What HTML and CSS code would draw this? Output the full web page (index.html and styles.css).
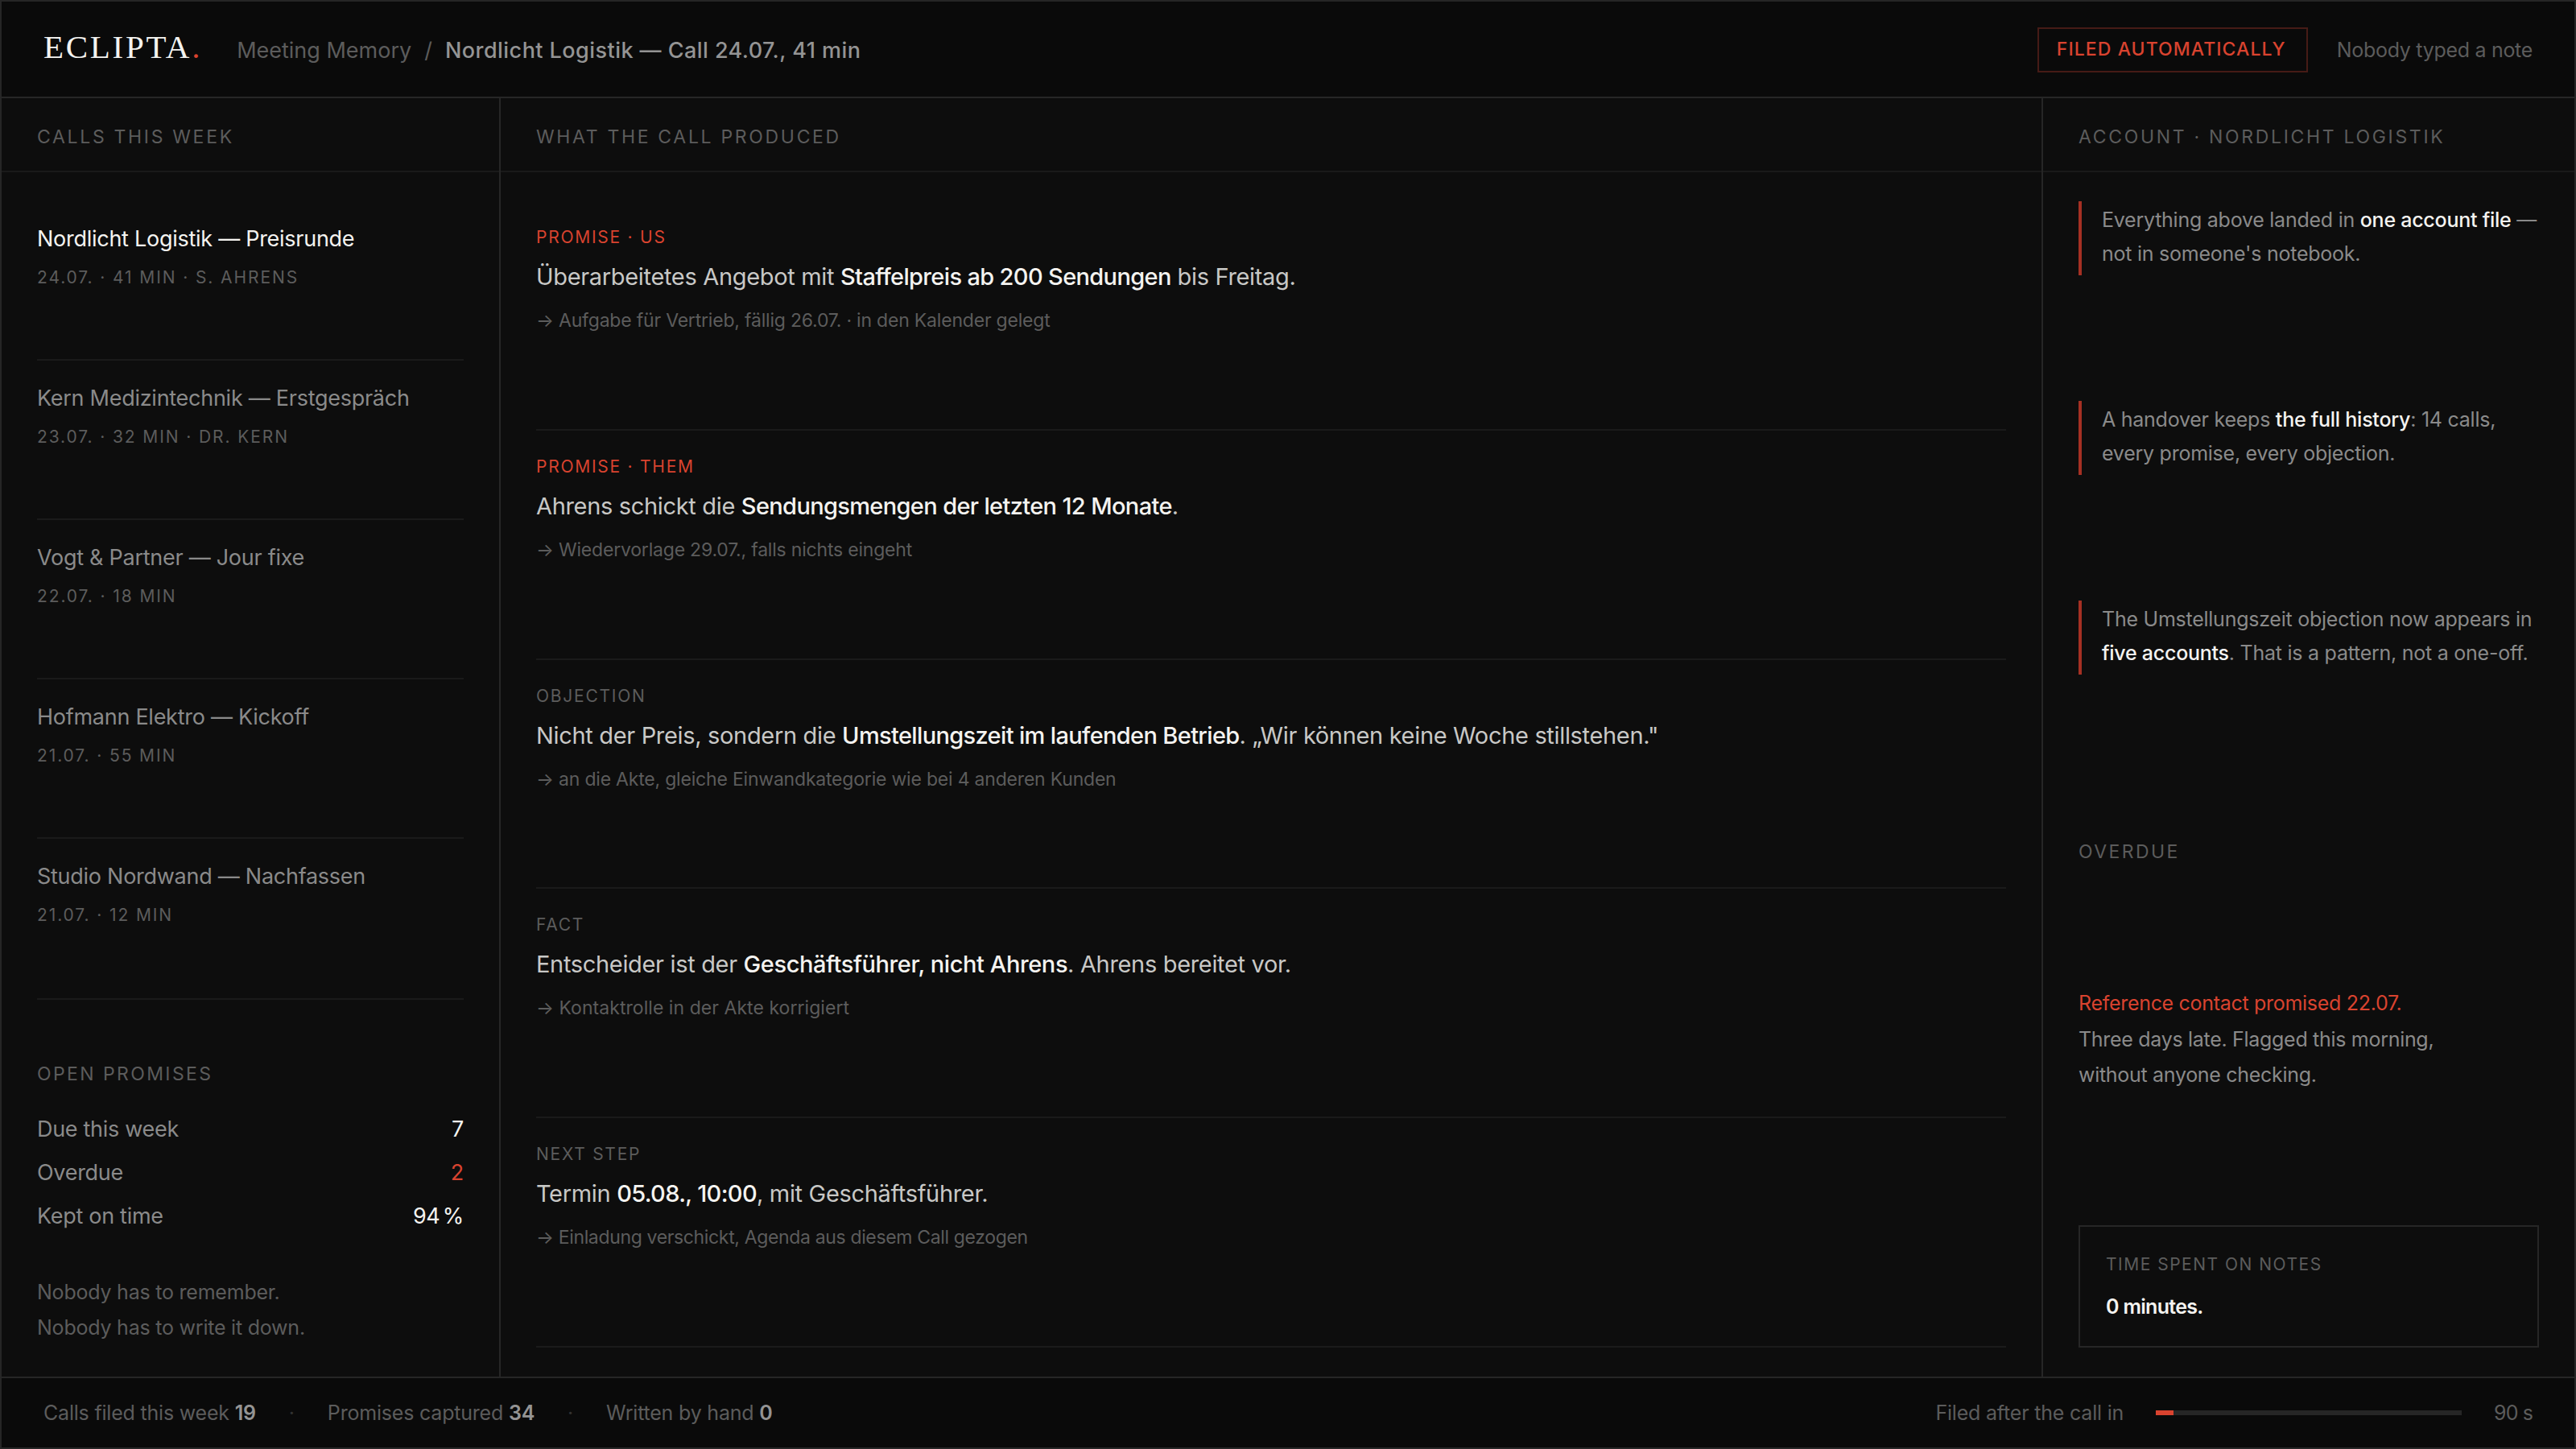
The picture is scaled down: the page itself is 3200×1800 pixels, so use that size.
FILE: index.html
```html
<!DOCTYPE html>
<html lang="en">
<head>
  <meta charset="utf-8">
  <title>Eclipta – Meeting Memory</title>
  <link rel="stylesheet" href="styles.css">
</head>
<body>
  <div class="app">
    <header class="topbar">
      <div class="brand">
        <div class="logo">ECLIPTA<span class="logo-dot">.</span></div>
        <div class="crumbs">
          <span>Meeting Memory</span>
          <span>/</span>
          <span class="crumb-current">Nordlicht Logistik — Call 24.07., 41 min</span>
        </div>
      </div>
      <div class="topbar-right">
        <div class="badge">FILED AUTOMATICALLY</div>
        <div class="topbar-note">Nobody typed a note</div>
      </div>
    </header>

    <main class="columns">
      <section class="column">
        <h2 class="column-head">CALLS THIS WEEK</h2>
        <div class="column-body">
          <div class="call-list">
            <div class="call active">
              <div class="call-title">Nordlicht Logistik — Preisrunde</div>
              <div class="call-meta">24.07. · 41 MIN · S. AHRENS</div>
            </div>
            <div class="call">
              <div class="call-title">Kern Medizintechnik — Erstgespräch</div>
              <div class="call-meta">23.07. · 32 MIN · DR. KERN</div>
            </div>
            <div class="call">
              <div class="call-title">Vogt &amp; Partner — Jour fixe</div>
              <div class="call-meta">22.07. · 18 MIN</div>
            </div>
            <div class="call">
              <div class="call-title">Hofmann Elektro — Kickoff</div>
              <div class="call-meta">21.07. · 55 MIN</div>
            </div>
            <div class="call">
              <div class="call-title">Studio Nordwand — Nachfassen</div>
              <div class="call-meta">21.07. · 12 MIN</div>
            </div>
          </div>
          <div class="summary">
            <div class="section-label">OPEN PROMISES</div>
            <div class="stats">
              <div class="stat"><span>Due this week</span><span class="stat-value">7</span></div>
              <div class="stat"><span>Overdue</span><span class="stat-value late">2</span></div>
              <div class="stat"><span>Kept on time</span><span class="stat-value">94 %</span></div>
            </div>
            <p class="summary-note">Nobody has to remember.<br>Nobody has to write it down.</p>
          </div>
        </div>
      </section>

      <section class="column">
        <h2 class="column-head">WHAT THE CALL PRODUCED</h2>
        <div class="column-body">
          <div class="entry promise">
            <div class="entry-type">PROMISE · US</div>
            <div class="entry-text">Überarbeitetes Angebot mit <strong>Staffelpreis ab 200 Sendungen</strong> bis Freitag.</div>
            <div class="entry-action">→ Aufgabe für Vertrieb, fällig 26.07. · in den Kalender gelegt</div>
          </div>
          <div class="entry promise">
            <div class="entry-type">PROMISE · THEM</div>
            <div class="entry-text">Ahrens schickt die <strong>Sendungsmengen der letzten 12 Monate</strong>.</div>
            <div class="entry-action">→ Wiedervorlage 29.07., falls nichts eingeht</div>
          </div>
          <div class="entry">
            <div class="entry-type">OBJECTION</div>
            <div class="entry-text">Nicht der Preis, sondern die <strong>Umstellungszeit im laufenden Betrieb</strong>. „Wir können keine Woche stillstehen."</div>
            <div class="entry-action">→ an die Akte, gleiche Einwandkategorie wie bei 4 anderen Kunden</div>
          </div>
          <div class="entry wide">
            <div class="entry-type">FACT</div>
            <div class="entry-text">Entscheider ist der <strong>Geschäftsführer, nicht Ahrens</strong>. Ahrens bereitet vor.</div>
            <div class="entry-action">→ Kontaktrolle in der Akte korrigiert</div>
          </div>
          <div class="entry tight">
            <div class="entry-type">NEXT STEP</div>
            <div class="entry-text">Termin <strong>05.08., 10:00</strong>, mit Geschäftsführer.</div>
            <div class="entry-action">→ Einladung verschickt, Agenda aus diesem Call gezogen</div>
          </div>
        </div>
      </section>

      <section class="column">
        <h2 class="column-head">ACCOUNT · NORDLICHT LOGISTIK</h2>
        <div class="column-body account">
          <div class="insight">Everything above landed in <strong>one account file</strong> —<br>not in someone's notebook.</div>
          <div class="insight">A handover keeps <strong>the full history</strong>: 14 calls,<br>every promise, every objection.</div>
          <div class="insight">The Umstellungszeit objection now appears in<br><strong>five accounts</strong>. That is a pattern, not a one-off.</div>
          <div class="section-label overdue-label">OVERDUE</div>
          <p class="overdue"><span class="late">Reference contact promised 22.07.</span><br>Three days late. Flagged this morning,<br>without anyone checking.</p>
          <div class="note-time">
            <div class="note-time-label">TIME SPENT ON NOTES</div>
            <div class="note-time-value">0 minutes.</div>
          </div>
        </div>
      </section>
    </main>

    <footer class="statusbar">
      <div class="counters">
        <span>Calls filed this week <b>19</b></span>
        <span class="dot">·</span>
        <span>Promises captured <b>34</b></span>
        <span class="dot">·</span>
        <span>Written by hand <b>0</b></span>
      </div>
      <div class="timer">
        <span>Filed after the call in</span>
        <div class="bar"><div class="bar-fill"></div></div>
        <span class="timer-value">90 s</span>
      </div>
    </footer>
  </div>
</body>
</html>
```

FILE: styles.css
```css
* {
  box-sizing: border-box;
}
body {
  margin: 0;
  background: #0d0d0d;
  font-family: Inter, sans-serif;
  color: #8a8a8a;
}
h2,
p {
  margin: 0;
  font-weight: 400;
}
strong {
  font-weight: 500;
  color: #f4f3f0;
}
.app {
  display: flex;
  flex-direction: column;
  width: 3200px;
  height: 1800px;
  border: 2px solid #262626;
}
.late {
  color: #d9432f;
}

/* top bar */
.topbar {
  display: flex;
  align-items: center;
  justify-content: space-between;
  height: 120px;
  padding: 2px 52px 0;
  background: #0a0a0a;
  border-bottom: 2px solid #262626;
}
.brand {
  display: flex;
  align-items: baseline;
  gap: 43px;
  padding-bottom: 8px;
}
.logo {
  font-family: "Liberation Serif", serif;
  font-size: 41px;
  line-height: 41px;
  letter-spacing: 2.7px;
  color: #f4f3f0;
}
.logo-dot {
  color: #d9432f;
}
.crumbs {
  display: flex;
  gap: 16px;
  font-size: 27px;
  line-height: 27px;
  color: #5c5c5c;
}
.crumb-current {
  color: #949494;
  font-weight: 500;
  letter-spacing: 0.45px;
}
.topbar-right {
  display: flex;
  align-items: center;
  gap: 36px;
}
.badge {
  width: 336px;
  height: 56px;
  padding-left: 22px;
  border: 2px solid #461b16;
  color: #d9432f;
  font-size: 23px;
  font-weight: 500;
  line-height: 51px;
  letter-spacing: 1.07px;
}
.topbar-note {
  font-size: 25px;
  letter-spacing: -0.3px;
  color: #5c5c5c;
}

/* columns */
.columns {
  display: grid;
  grid-template-columns: 620px 1fr 660px;
  height: 1588px;
}
.column {
  display: flex;
  flex-direction: column;
  border-right: 2px solid #262626;
}
.column:last-child {
  border-right: none;
}
.column-head {
  height: 92px;
  padding-left: 44px;
  border-bottom: 2px solid #1a1a1a;
  font-size: 23px;
  line-height: 97px;
  letter-spacing: 2.68px;
  color: #5c5c5c;
}
.column-body {
  display: flex;
  flex: 1;
  flex-direction: column;
  padding: 36px 44px;
}
.section-label {
  font-size: 23px;
  line-height: 38px;
  letter-spacing: 2.4px;
  color: #5c5c5c;
}

/* calls */
.call-list {
  display: flex;
  flex: 1;
  flex-direction: column;
}
.call {
  flex: 1;
  padding-top: 27px;
  border-bottom: 2px solid #1a1a1a;
}
.call:last-child {
  border-bottom-color: transparent;
}
.call-title {
  font-size: 27px;
  line-height: 39px;
  letter-spacing: -0.27px;
}
.active .call-title {
  color: #f4f3f0;
}
.call-meta {
  margin-top: 12px;
  font-size: 21px;
  line-height: 33px;
  letter-spacing: 1.9px;
  color: #5c5c5c;
}
.summary {
  height: 434px;
  padding-top: 73px;
  border-top: 2px solid #1a1a1a;
}
.stats {
  margin-top: 23px;
}
.stat {
  display: flex;
  justify-content: space-between;
  font-size: 27px;
  line-height: 54px;
  letter-spacing: -0.3px;
}
.stat-value {
  color: #f4f3f0;
  word-spacing: -4px;
}
.stat-value.late {
  color: #d9432f;
}
.summary-note {
  margin-top: 45px;
  font-size: 25px;
  line-height: 44px;
  letter-spacing: -0.22px;
  color: #5c5c5c;
}

/* call results */
.entry {
  flex: 1;
  padding-top: 28px;
  border-bottom: 2px solid #1a1a1a;
}
.entry-type {
  font-size: 21px;
  line-height: 33px;
  letter-spacing: 1.75px;
  color: #5c5c5c;
}
.promise .entry-type {
  color: #d9432f;
}
.entry-text {
  margin-top: 11px;
  font-size: 29px;
  line-height: 44px;
  letter-spacing: -0.33px;
  color: #c8c8c6;
}
.entry-text strong {
  letter-spacing: -0.65px;
}
.entry-action {
  margin-top: 14px;
  font-size: 23px;
  line-height: 36px;
  letter-spacing: -0.2px;
  color: #5c5c5c;
}
.wide .entry-text strong {
  letter-spacing: -0.42px;
}
.wide .entry-action {
  letter-spacing: 0.05px;
}
.tight .entry-action {
  letter-spacing: -0.35px;
}

/* account */
.account {
  justify-content: space-between;
}
.insight {
  padding: 2px 0 6px 25px;
  border-left: 4px solid #a53023;
  font-size: 25px;
  line-height: 42px;
  letter-spacing: -0.25px;
  white-space: nowrap;
}
.insight strong {
  letter-spacing: -0.25px;
}
.overdue-label {
  padding-top: 54px;
  line-height: 20px;
}
.overdue {
  height: 142px;
  font-size: 25px;
  line-height: 44.5px;
  letter-spacing: -0.3px;
}
.note-time {
  height: 152px;
  padding: 30px 32px;
  border: 2px solid #262626;
}
.note-time-label {
  font-size: 21px;
  line-height: 33px;
  letter-spacing: 1.5px;
  color: #5c5c5c;
}
.note-time-value {
  margin-top: 19px;
  font-size: 25px;
  font-weight: 600;
  line-height: 35px;
  letter-spacing: -0.7px;
  color: #f4f3f0;
}

/* status bar */
.statusbar {
  display: flex;
  align-items: center;
  justify-content: space-between;
  height: 88px;
  padding: 0 52px;
  background: #0a0a0a;
  border-top: 2px solid #262626;
  font-size: 25px;
  letter-spacing: -0.2px;
  color: #5c5c5c;
}
.statusbar b {
  font-weight: 600;
  color: #949494;
}
.counters {
  display: flex;
  gap: 41px;
}
.dot {
  color: #333;
}
.timer {
  display: flex;
  align-items: center;
  gap: 40px;
}
.timer-value {
  letter-spacing: -0.9px;
}
.bar {
  width: 380px;
  height: 6px;
  background: #262626;
}
.bar-fill {
  width: 22px;
  height: 100%;
  background: #d9432f;
}
```
